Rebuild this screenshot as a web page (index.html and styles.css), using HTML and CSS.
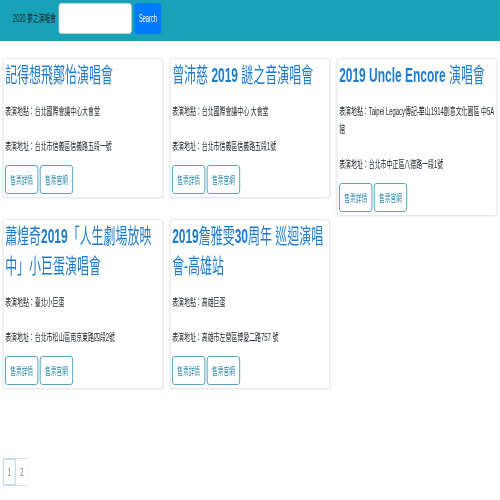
FILE: index.html
```html
<!DOCTYPE html>
<html lang="zh-Hant">
<head>
<meta charset="utf-8">
<title>2020 夢之演唱會</title>
<link rel="stylesheet" href="styles.css">
</head>
<body>
<div class="viewport">
<div class="page">
  <nav class="navbar">
    <span class="brand">2020 夢之演唱會</span>
    <form class="search">
      <input class="search-input" type="text" aria-label="search">
      <button class="search-btn" type="button">Search</button>
    </form>
  </nav>
  <main class="main">
    <div class="grid">
      <div class="card">
        <h3 class="title">記得想飛鄭怡演唱會</h3>
        <p class="info">表演地點：台北國際會議中心大會堂</p>
        <p class="info last">表演地址：台北市信義區信義路五段一號</p>
        <div class="actions"><a class="btn">售票詳情</a><a class="btn">售票官網</a></div>
      </div>
      <div class="card">
        <h3 class="title">曾沛慈 <b>2019</b> 謎之音演唱會</h3>
        <p class="info">表演地點：台北國際會議中心 大會堂</p>
        <p class="info last">表演地址：台北市信義區信義路五段1號</p>
        <div class="actions"><a class="btn">售票詳情</a><a class="btn">售票官網</a></div>
      </div>
      <div class="card">
        <h3 class="title"><b>2019 Uncle Encore</b> 演唱會</h3>
        <p class="info">表演地點：Taipei Legacy傳記-華山1914創意文化園區 中5A館</p>
        <p class="info last">表演地址：台北市中正區八德路一段1號</p>
        <div class="actions"><a class="btn">售票詳情</a><a class="btn">售票官網</a></div>
      </div>
      <div class="card">
        <h3 class="title"><span>蕭煌奇<b>2019</b>「人生劇場放映</span><br><span>中」小巨蛋演唱會</span></h3>
        <p class="info">表演地點：臺北小巨蛋</p>
        <p class="info last">表演地址：台北市松山區南京東路四段2號</p>
        <div class="actions"><a class="btn">售票詳情</a><a class="btn">售票官網</a></div>
      </div>
      <div class="card">
        <h3 class="title"><span><b>2019</b>詹雅雯<b>30</b>周年 巡迴演唱</span><br><span>會-高雄站</span></h3>
        <p class="info">表演地點：高雄巨蛋</p>
        <p class="info last">表演地址：高雄市左營區博愛二路757 號</p>
        <div class="actions"><a class="btn">售票詳情</a><a class="btn">售票官網</a></div>
      </div>
    </div>
    <ul class="pagination">
      <li class="page-item active">1</li>
      <li class="page-item">2</li>
    </ul>
  </main>
</div>
</div>
</body>
</html>
```
FILE: styles.css
```css
html, body {
  margin: 0;
  padding: 0;
  overflow: hidden;
  background: #ffffff;
}

body {
  font-family: "Liberation Sans", "Noto Sans CJK TC", sans-serif;
  color: #212529;
}

.viewport {
  width: 500px;
  height: 500px;
  overflow: hidden;
}

.page {
  width: 877px;
  transform: scaleX(0.57);
  transform-origin: 0 0;
}

.navbar {
  height: 41px;
  box-sizing: border-box;
  background: #17a2b8;
  display: flex;
  align-items: flex-start;
  padding: 3px 0 0 23px;
}

.brand {
  font-size: 10px;
  line-height: 31px;
  color: #212529;
  margin-right: 5px;
}

.search {
  display: flex;
  gap: 5px;
  margin: 0;
}

.search-input {
  width: 128px;
  height: 31px;
  box-sizing: border-box;
  border: 1px solid #ced4da;
  border-radius: 4px;
  background: #fff;
  padding: 0;
}

.search-btn {
  width: 47px;
  height: 31px;
  border: 0;
  border-radius: 4px;
  background: #007bff;
  color: #fff;
  font-family: "Liberation Sans", sans-serif;
  font-size: 10px;
  padding: 0;
}

.main {
  padding: 17px 5px 0 5px;
}

.grid {
  display: grid;
  grid-template-columns: repeat(3, 1fr);
  column-gap: 12px;
  row-gap: 3px;
  align-items: start;
}

.card {
  border: 1px solid #e2e4e6;
  border-radius: 4px;
  box-shadow: 0 1px 2px rgba(0, 0, 0, 0.06);
  padding: 1px 3px 3px 3px;
}

.title {
  margin: 0 0 13px 0;
  font-size: 21px;
  line-height: 30px;
  font-weight: 400;
  color: #1f7bcc;
}

.title b {
  font-weight: 700;
}

.info {
  margin: 0 0 17px 0;
  font-size: 10.4px;
  line-height: 18px;
  color: #212529;
}

.info.last {
  margin-bottom: 9px;
}

.actions {
  display: flex;
  gap: 3px;
}

.btn {
  display: flex;
  align-items: center;
  justify-content: center;
  width: 58px;
  height: 29px;
  box-sizing: border-box;
  border: 1px solid #2b8ab0;
  border-radius: 4px;
  color: #2b86ad;
  font-size: 10px;
}

.pagination {
  list-style: none;
  margin: 69px 0 0 0;
  padding: 0;
  display: flex;
}

.page-item {
  width: 22px;
  height: 28px;
  box-sizing: border-box;
  border: 1px solid #dee2e6;
  display: flex;
  align-items: center;
  justify-content: center;
  font-size: 10px;
  color: #6c7a89;
}

.page-item.active {
  width: 23px;
  border: 2px solid #c3d9f3;
  border-radius: 3px 0 0 3px;
}

.page-item + .page-item {
  border-left: 0;
  border-radius: 0 3px 3px 0;
}
```
